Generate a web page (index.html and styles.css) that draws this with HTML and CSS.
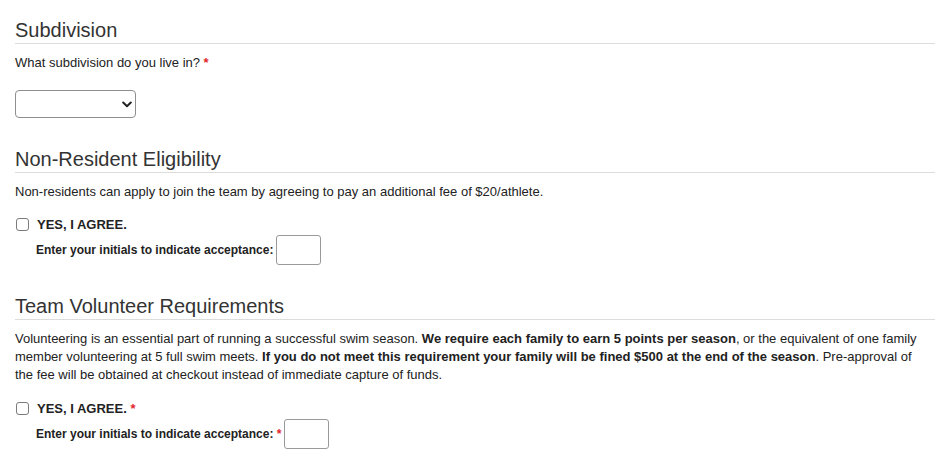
FILE: index.html
```html
<!DOCTYPE html>
<html>
<head>
<meta charset="utf-8">
<link rel="stylesheet" href="styles.css">
</head>
<body>
<div class="page">
  <section class="section">
    <h3 class="section-title">Subdivision</h3>
    <div class="field-label">What subdivision do you live in? <span class="req">*</span></div>
    <div class="select-wrap">
      <select class="select"><option></option></select>
      <svg class="chev" width="10" height="7" viewBox="0 0 10 7"><path d="M1.2 1.5 L5 5.2 L8.8 1.5" fill="none" stroke="#222" stroke-width="2" stroke-linecap="round" stroke-linejoin="round"/></svg>
    </div>
  </section>

  <section class="section">
    <h3 class="section-title">Non-Resident Eligibility</h3>
    <p class="desc">Non-residents can apply to join the team by agreeing to pay an additional fee of $20/athlete.</p>
    <label class="agree"><input type="checkbox" class="check"><span class="agree-text">YES, I AGREE.</span></label>
    <div class="initials">
      <span class="initials-label">Enter your initials to indicate acceptance:</span>
      <input type="text" class="initials-input">
    </div>
  </section>

  <section class="section">
    <h3 class="section-title">Team Volunteer Requirements</h3>
    <p class="desc">Volunteering is an essential part of running a successful swim season. <b>We require each family to earn 5 points per season</b>, or the equivalent of one family member volunteering at 5 full swim meets. <b>If you do not meet this requirement your family will be fined $500 at the end of the season</b>. Pre-approval of the fee will be obtained at checkout instead of immediate capture of funds.</p>
    <label class="agree agree-lower"><input type="checkbox" class="check"><span class="agree-text">YES, I AGREE. <span class="req">*</span></span></label>
    <div class="initials">
      <span class="initials-label">Enter your initials to indicate acceptance: <span class="req">*</span></span>
      <input type="text" class="initials-input">
    </div>
  </section>
</div>
</body>
</html>
```

FILE: styles.css
```css
html, body {
  margin: 0;
  padding: 0;
  background: #fff;
}
body {
  font-family: "Liberation Sans", Arial, Helvetica, sans-serif;
  font-size: 13px;
  color: #222;
}
.page {
  padding: 19px 14px 0 15px;
}
.section {
  margin-bottom: 30px;
}
.section-title {
  margin: 0;
  font-size: 20px;
  line-height: 23px;
  font-weight: normal;
  color: #333;
  padding-bottom: 1px;
  border-bottom: 1px solid #dcdcdc;
}
.field-label {
  margin-top: 10px;
  line-height: 18px;
}
.req {
  color: #e3262b;
  font-weight: bold;
}
.select-wrap {
  position: relative;
  width: 121px;
  height: 28px;
  margin-top: 18px;
}
.select {
  appearance: none;
  -webkit-appearance: none;
  width: 121px;
  height: 28px;
  margin: 0;
  border: 1px solid #8e8e8e;
  border-radius: 4px;
  background: #fff;
  font-family: inherit;
  font-size: 13px;
}
.chev {
  position: absolute;
  right: 4px;
  top: 11px;
  pointer-events: none;
}
.desc {
  margin: 10px 0 0;
  line-height: 18px;
  max-width: 914px;
}
.agree {
  display: flex;
  align-items: center;
  height: 18px;
  margin-top: 14px;
  font-weight: bold;
}
.agree-lower {
  margin-top: 15px;
}
.check {
  appearance: none;
  -webkit-appearance: none;
  width: 13px;
  height: 13px;
  margin: 0 8px 0 1px;
  border: 1px solid #7b7b7b;
  border-radius: 3px;
  background: #fff;
  box-sizing: border-box;
}
.agree-text {
  font-size: 13px;
  color: #222;
}
.initials {
  display: flex;
  align-items: center;
  margin-top: 2px;
  padding-left: 21px;
}
.initials-label {
  font-size: 12px;
  font-weight: bold;
  margin-right: 3px;
}
.initials-input {
  width: 45px;
  height: 30px;
  box-sizing: border-box;
  margin: 0;
  border: 1px solid #999;
  border-radius: 3px;
  background: #fff;
}
```
